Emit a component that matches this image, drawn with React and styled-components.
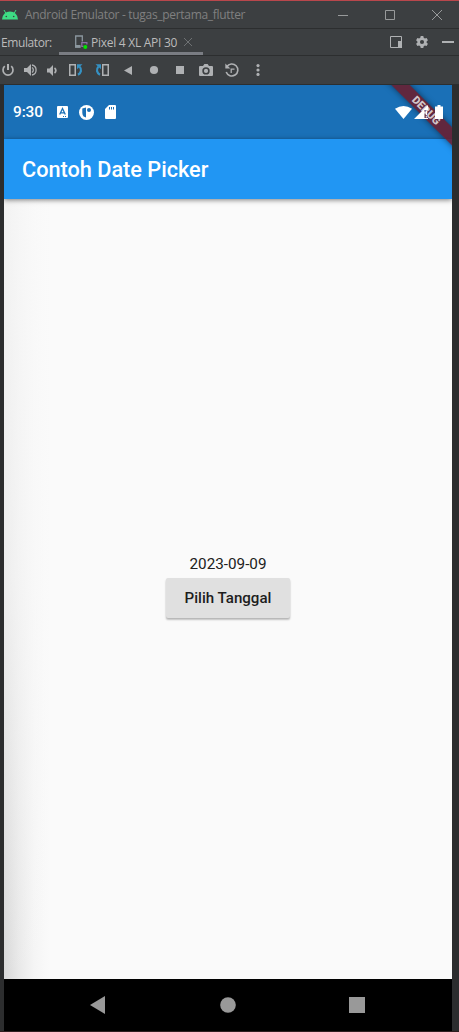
import React from "react";
import styled, { createGlobalStyle } from "styled-components";

const Global = createGlobalStyle`
  * { box-sizing: border-box; }
  body { margin: 0; background: #2b2b2b; }
`;

const Window = styled.main`
  width: 459px;
  height: 1032px;
  display: flex;
  flex-direction: column;
  overflow: hidden;
  background: #2c2d2e;
  border-top: 1px solid #b9474c;
  border-bottom: 1px solid #2e1e20;
  font-family: "Open Sans", "Noto Sans", sans-serif;
  font-size: 12px;
  color: #bbbbbb;
`;

const Bar = styled.div`
  flex: none;
  display: flex;
  align-items: center;
  height: ${(p) => p.$height}px;
  background: #3c3f41;
  border-bottom: 1px solid #2c2e2f;
`;

const WindowTitle = styled.span`
  margin-left: 7px;
  color: #808080;
  letter-spacing: -0.31px;
  white-space: nowrap;
`;

const Controls = styled.div`
  display: flex;
  margin-left: auto;
`;

const Slot = styled.div`
  flex: none;
  width: ${(p) => p.$width}px;
  display: flex;
  justify-content: center;
  align-items: center;
`;

const Label = styled.span`
  width: 59px;
  padding-left: 1px;
  letter-spacing: -0.4px;
`;

const Tab = styled.div`
  width: 144px;
  height: 26px;
  padding: 3px 0 0 15px;
  display: flex;
  align-items: center;
  border-bottom: 3px solid #7a7d83;
  white-space: nowrap;
`;

const TabName = styled.span`
  width: 93px;
  margin-left: 3px;
  letter-spacing: -0.27px;
`;

const Tools = styled.div`
  display: flex;
  margin-left: -3px;
`;

const Icon = styled.svg`
  display: block;
  flex: none;
  overflow: visible;
`;

const Device = styled.section`
  flex: none;
  width: 448px;
  height: 946px;
  margin-left: 4px;
  display: flex;
  flex-direction: column;
  position: relative;
  overflow: hidden;
  font-family: Roboto, sans-serif;
`;

const StatusBar = styled.header`
  flex: none;
  height: 54px;
  padding: 0 9px;
  display: flex;
  align-items: center;
  background: #1a70b7;
  color: #fff;
`;

const Clock = styled.span`
  width: 44px;
  font-size: 15.4px;
  font-weight: 500;
  letter-spacing: -0.1px;
  line-height: 54px;
`;

const StatusIcons = styled.div`
  display: flex;
  align-items: center;
  gap: ${(p) => p.$gap}px;
  margin-left: ${(p) => (p.$end ? "auto" : "0")};
  position: relative;
  z-index: 3;
`;

const AppBar = styled.div`
  flex: none;
  height: 60px;
  padding-left: 18px;
  display: flex;
  align-items: center;
  background: #2196f3;
  color: #fff;
  box-shadow: 0 1px 5px rgba(0, 0, 0, 0.5);
  z-index: 1;
`;

const AppTitle = styled.h1`
  margin: 0;
  padding-top: 1px;
  font-size: 21.7px;
  font-weight: 500;
  line-height: 30px;
`;

const Body = styled.div`
  flex: 1;
  display: flex;
  flex-direction: column;
  align-items: center;
  padding-top: 355px;
  background:
    linear-gradient(to bottom, rgba(250, 250, 250, 0.78) 0, rgba(250, 250, 250, 0.6) 50%, rgba(250, 250, 250, 0) 100%),
    linear-gradient(to right, #d8d8d8 0, #e9e9e9 15px, #f5f5f5 30px, #fafafa 45px);
`;

const DateText = styled.span`
  font-size: 15.25px;
  line-height: 20px;
  color: #212121;
`;

const DateButton = styled.button`
  width: 124px;
  height: 39.5px;
  margin-top: 4px;
  padding: 0;
  border: 0;
  border-radius: 2px;
  background: #e0e0e0;
  color: #1d1d1d;
  font: 500 15.1px/40px Roboto, sans-serif;
  box-shadow: 0 2px 2px rgba(0, 0, 0, 0.2), 0 1px 2px rgba(0, 0, 0, 0.12);
`;

const NavBar = styled.nav`
  flex: none;
  height: 52px;
  padding: 0 28.5px;
  display: flex;
  align-items: center;
  background: #000;
`;

const DebugBanner = styled.div`
  position: absolute;
  left: 367px;
  top: 19px;
  width: 110px;
  height: 13.4px;
  transform: rotate(45deg);
  background: rgba(107, 29, 46, 0.88);
  box-shadow: 0 0 6px rgba(0, 0, 0, 0.5);
  color: #d2c6ca;
  font-size: 11px;
  font-weight: 900;
  line-height: 13.5px;
  text-align: center;
  z-index: 2;
`;

const Art = ({ w, h, children, ...rest }) => (
  <Icon width={w} height={h} viewBox={`0 0 ${w} ${h}`} fill="#afb1b3" {...rest}>{children}</Icon>
);

const tools = [
  [22, <Art w={12} h={12}><path d="M5 0h2v6H5z" /><path d="M2.8 2.2a5 5 0 1 0 6.4 0" fill="none" stroke="#afb1b3" strokeWidth="1.7" /></Art>],
  [22, <Art w={13} h={12}><path d="M0 4h3l4-4v12l-4-4H0z" /><path d="M8 3.5a3 3 0 0 1 0 5M8 1a5.1 5.1 0 0 1 0 10" fill="none" stroke="#afb1b3" strokeWidth="1.3" /></Art>],
  [22, <Art w={10} h={11}><path d="M0 3.5h2.5L6 0v11L2.5 7.5H0z" /><path d="M7.5 3a3 3 0 0 1 0 5" fill="none" stroke="#afb1b3" strokeWidth="1.8" /></Art>],
  [26, <Art w={14} h={12}><path d="M.75.75h5.5v10.5H.75z" fill="none" stroke="#afb1b3" strokeWidth="1.5" /><path d="M9 10.8C12.3 9 13 5.2 10.6 2.8" fill="none" stroke="#3592c4" strokeWidth="2.2" /><path d="M8 .3h5.5L8 5.2z" fill="#3592c4" /></Art>],
  [26, <Art w={14} h={12}><path d="M7.75.75h5.5v10.5h-5.5z" fill="none" stroke="#afb1b3" strokeWidth="1.5" /><path d="M5 10.8C1.7 9 1 5.2 3.4 2.8" fill="none" stroke="#3592c4" strokeWidth="2.2" /><path d="M6 .3H.5L6 5.2z" fill="#3592c4" /></Art>],
  [26, <Art w={8} h={9}><path d="M8 0v9L0 4.5z" /></Art>],
  [26, <Art w={8} h={8}><circle cx="4" cy="4" r="4.1" /></Art>],
  [26, <Art w={8} h={8}><path d="M0 0h8v8H0z" /></Art>],
  [26, <Art w={14} h={12}><path fillRule="evenodd" d="M1 2h3l1.4-2h3.2L10 2h3q1 0 1 1v8q0 1-1 1H1q-1 0-1-1V3q0-1 1-1zM7 3.2a3.7 3.7 0 1 0 0 7.4 3.7 3.7 0 0 0 0-7.4z" /><circle cx="7" cy="6.9" r="2.1" /></Art>],
  [26, <Art w={14} h={14}><path d="M1.8 3.7A6 6 0 1 1 1.2 9" fill="none" stroke="#afb1b3" strokeWidth="1.6" /><path d="M.3.5v5h5z" /><path d="M6.2 10V6.2h3.3" fill="none" stroke="#afb1b3" strokeWidth="1.3" /></Art>],
  [26, <Art w={4} h={12}><circle cx="2" cy="1.6" r="1.6" /><circle cx="2" cy="6" r="1.6" /><circle cx="2" cy="10.4" r="1.6" /></Art>],
];

const AndroidLogo = () => (
  <Art w={16} h={12} fill="#3ddc84" style={{ marginLeft: 2 }}>
    <path d="M0 10.5a8 8 0 0 1 16 0z" />
    <path d="M4 4.5 2 1M12 4.5 14 1" stroke="#3ddc84" strokeWidth="1" />
    <circle cx="4.3" cy="7.5" r=".8" fill="#3c3f41" /><circle cx="11.7" cy="7.5" r=".8" fill="#3c3f41" />
  </Art>
);

const gear = "M8.5 0l.5 2 1.4.8 2-.6L13.9 5l-1.5 1.3v1.5L13.9 9l-1.5 2.8-2-.6-1.4.8-.5 2h-3L5 12l-1.4-.8-2 .6L.1 9l1.5-1.2V6.3L.1 5l1.5-2.8 2 .6L5 2l.5-2zM7 4.6a2.4 2.4 0 1 0 0 4.8 2.4 2.4 0 0 0 0-4.8z";

export default function App() {
  return (
    <>
      <Global />
      <Window>
        <Bar $height={28}>
          <AndroidLogo />
          <WindowTitle>Android Emulator - tugas_pertama_flutter</WindowTitle>
          <Controls>
            <Slot $width={44}><Art w={10} h={10}><path d="M0 5h10v1H0z" fill="#989a9b" /></Art></Slot>
            <Slot $width={50}><Art w={10} h={10}><path d="M.5.5h9v9h-9z" fill="none" stroke="#989a9b" /></Art></Slot>
            <Slot $width={44}><Art w={10} h={10}><path d="m0 0 10 10M10 0 0 10" fill="none" stroke="#989a9b" /></Art></Slot>
          </Controls>
        </Bar>
        <Bar $height={27}>
          <Label>Emulator:</Label>
          <Tab>
            <Art w={14} h={14}>
              <path d="M8.3 6.5V1H1.7v11H6.5" fill="none" stroke="#8b979e" strokeWidth="1.3" />
              <path d="M1 10h5.5v2.6H1z" fill="#8b979e" />
              <path d="M12.9 9.5V7.6H7.8v3.8h1.7" fill="none" stroke="#8b70a5" strokeWidth="1.2" />
              <circle cx="11.3" cy="12" r="2" fill="#00e600" />
            </Art>
            <TabName>Pixel 4 XL API 30</TabName>
            <Art w={8} h={8}><path d="m0 0 8 8M8 0 0 8" stroke="#6e7173" fill="none" /></Art>
          </Tab>
          <Controls>
            <Slot $width={22}><Art w={12} h={12}><path d="M.5.5h11v11H.5z" fill="none" stroke="#afb1b3" /><path d="M8 5h4v7H8z" /></Art></Slot>
            <Slot $width={30}><Art w={12} h={12} viewBox="0 0 14 14"><path fillRule="evenodd" d={gear} /></Art></Slot>
            <Slot $width={22}><Art w={12} h={2}><path d="M0 0h12v2H0z" /></Art></Slot>
          </Controls>
        </Bar>
        <Bar $height={29}>
          <Tools>
            {tools.map(([width, art], i) => <Slot key={i} $width={width}>{art}</Slot>)}
          </Tools>
        </Bar>
        <Device>
          <StatusBar>
            <Clock>9:30</Clock>
            <StatusIcons $gap={11}>
              <Art w={11} h={12} fill="#fff">
                <rect width="11" height="12" rx="1" />
                <path d="m2.7 8.5 2.8-6 2.8 6M3.7 6.8h3.6" stroke="#1a70b7" strokeWidth="1.3" fill="none" />
                <path d="M6 10h1v1H6zM8 10h1v1H8z" fill="#1a70b7" />
              </Art>
              <Art w={15} h={15} fill="#fff">
                <circle cx="7.5" cy="7.5" r="7.5" />
                <path d="M3.3 3.6 7 2.4v10.2L4.6 11.4Q3.3 10 3.3 8z" fill="#1a70b7" />
                <circle cx="10" cy="5" r="2" fill="#1a70b7" />
              </Art>
              <Art w={11} h={14} fill="#fff">
                <path d="M4 0h6q1 0 1 1v12q0 1-1 1H1q-1 0-1-1V4z" />
                <path d="M4 2h1v2.5H4zM6 2h1v2.5H6zM8 2h1v2.5H8z" fill="#1a70b7" />
              </Art>
            </StatusIcons>
            <StatusIcons $gap={2} $end>
              <Art w={17} h={13} fill="#fff"><path d="M0 2.7Q8.5-2.9 17 2.7L8.5 13z" /></Art>
              <Art w={14} h={14} fill="#fff">
                <path fillRule="evenodd" d="M14 0v14H0zM10.5 5v8H14V5z" />
                <path d="M11.7 6h1.4v4.2h-1.4zM11.7 11.2h1.4v1.2h-1.4z" />
              </Art>
              <Art w={8} h={14} fill="#fff" style={{ marginLeft: 5 }}><path d="M2.5 0h3v1.5H8V14H0V1.5h2.5z" /></Art>
            </StatusIcons>
          </StatusBar>
          <AppBar><AppTitle>Contoh Date Picker</AppTitle></AppBar>
          <Body>
            <DateText>2023-09-09</DateText>
            <DateButton>Pilih Tanggal</DateButton>
          </Body>
          <NavBar>
            <Slot $width={130}><Art w={15} h={18} fill="#999"><path d="M15 0v18L0 9z" /></Art></Slot>
            <Slot $width={130}><Art w={16} h={16} fill="#999"><circle cx="8" cy="8" r="7.8" /></Art></Slot>
            <Slot $width={128}><Art w={16} h={16} fill="#999"><path d="M0 0h16v16H0z" /></Art></Slot>
          </NavBar>
          <DebugBanner>DEBUG</DebugBanner>
        </Device>
      </Window>
    </>
  );
}
